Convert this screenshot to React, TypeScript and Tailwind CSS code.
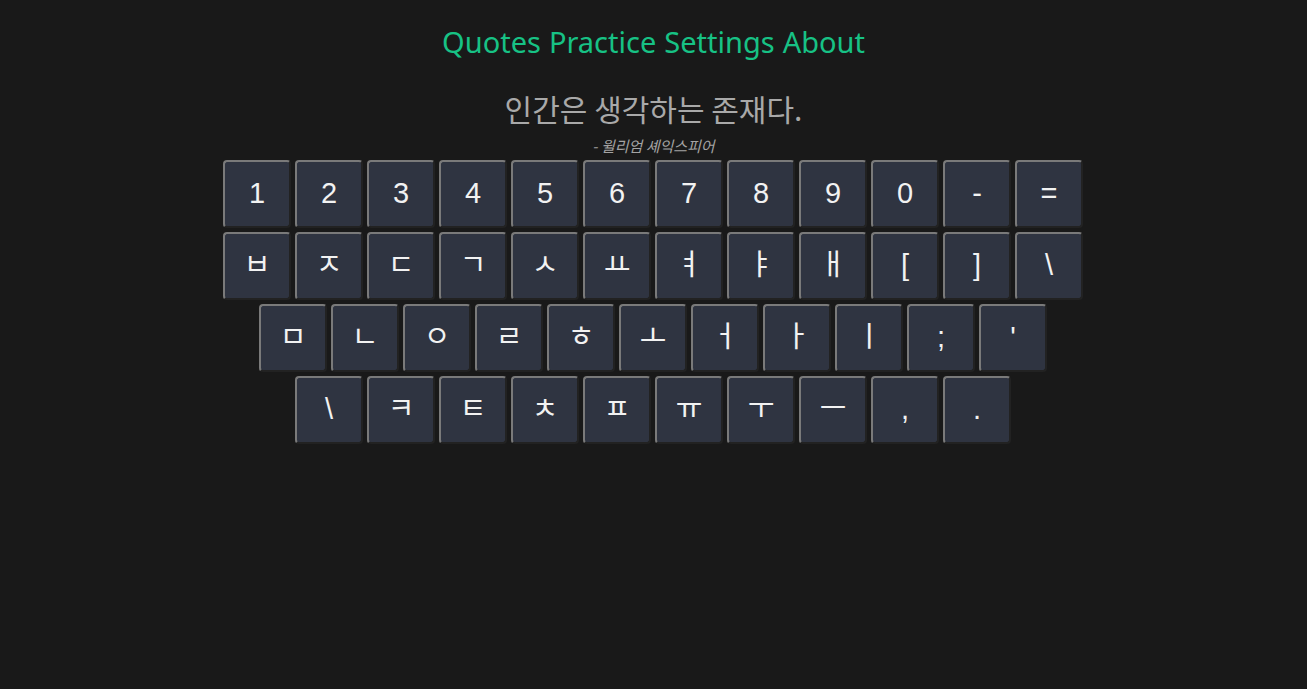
import React from 'react';

const rows: string[][] = [
  ['1', '2', '3', '4', '5', '6', '7', '8', '9', '0', '-', '='],
  ['ㅂ', 'ㅈ', 'ㄷ', 'ㄱ', 'ㅅ', 'ㅛ', 'ㅕ', 'ㅑ', 'ㅐ', '[', ']', '\\'],
  ['ㅁ', 'ㄴ', 'ㅇ', 'ㄹ', 'ㅎ', 'ㅗ', 'ㅓ', 'ㅏ', 'ㅣ', ';', "'"],
  ['\\', 'ㅋ', 'ㅌ', 'ㅊ', 'ㅍ', 'ㅠ', 'ㅜ', 'ㅡ', ',', '.'],
];

const Key: React.FC<{ label: string }> = ({ label }) => (
  <div className="m-[2px] w-[68px] h-[68px] flex items-center justify-center rounded-[4px] bg-[#2f3441] border-2 border-t-[#7a7a7a] border-l-[#7a7a7a] border-r-[#222] border-b-[#222] text-[29px] text-[#f2f2f2] font-['Liberation_Sans','Noto_Sans_CJK_KR',sans-serif]">
    {label}
  </div>
);

const App: React.FC = () => {
  return (
    <div className="min-h-screen bg-[#191919] flex flex-col items-center">
      <nav className="mt-[21px] h-[42px] flex items-center gap-[8px] text-[29px] text-[#17c285] font-['Noto_Sans',sans-serif]">
        <a href="#">Quotes</a>
        <a href="#">Practice</a>
        <a href="#">Settings</a>
        <a href="#">About</a>
      </nav>
      <div className="mt-[25px] h-[40px] flex items-center text-[30px] text-[#a9a9a9] font-['Noto_Sans_CJK_KR',sans-serif]">
        인간은 생각하는 존재다.
      </div>
      <div className="mt-[8px] h-[20px] flex items-center text-[15px] italic text-[#a3a3a3] font-['Noto_Sans_CJK_KR',sans-serif]">
        - 윌리엄 셰익스피어
      </div>
      <div className="mt-[2px] pr-px flex flex-col items-center">
        {rows.map((row, i) => (
          <div key={i} className="flex">
            {row.map((k, j) => (
              <Key key={j} label={k} />
            ))}
          </div>
        ))}
      </div>
    </div>
  );
};

export default App;
